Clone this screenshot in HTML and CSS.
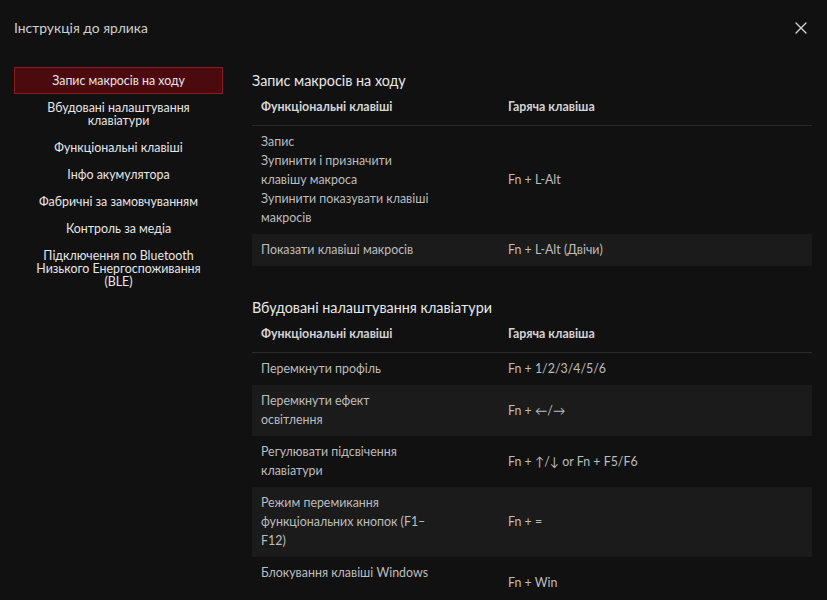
FILE: index.html
```html
<!DOCTYPE html>
<html lang="uk">
<head>
<meta charset="utf-8">
<title>Інструкція до ярлика</title>
<link rel="stylesheet" href="styles.css">
</head>
<body>
<div class="dialog">
  <header class="titlebar">
    <div class="title">Інструкція до ярлика</div>
    <button class="close" aria-label="Закрити">
      <svg width="12" height="12" viewBox="0 0 12 12"><path d="M1 1L11 11M11 1L1 11" stroke="#d2d2d2" stroke-width="1.4" fill="none" stroke-linecap="round"/></svg>
    </button>
  </header>
  <div class="content">
    <nav class="nav">
      <div class="nav-item active">Запис макросів на ходу</div>
      <div class="nav-item">Вбудовані налаштування клавіатури</div>
      <div class="nav-item">Функціональні клавіші</div>
      <div class="nav-item">Інфо акумулятора</div>
      <div class="nav-item">Фабричні за замовчуванням</div>
      <div class="nav-item">Контроль за медіа</div>
      <div class="nav-item">Підключення по Bluetooth Низького Енергоспоживання (BLE)</div>
    </nav>
    <main class="main">
      <section class="section">
        <h2 class="section-title">Запис макросів на ходу</h2>
        <div class="table">
          <div class="row head">
            <div class="cell">Функціональні клавіші</div>
            <div class="cell">Гаряча клавіша</div>
          </div>
          <div class="row">
            <div class="cell">
              <div>Запис</div>
              <div>Зупинити і призначити клавішу макроса</div>
              <div>Зупинити показувати клавіші макросів</div>
            </div>
            <div class="cell">Fn + L-Alt</div>
          </div>
          <div class="row">
            <div class="cell">Показати клавіші макросів</div>
            <div class="cell">Fn + L-Alt (Двічи)</div>
          </div>
        </div>
      </section>
      <section class="section">
        <h2 class="section-title">Вбудовані налаштування клавіатури</h2>
        <div class="table">
          <div class="row head">
            <div class="cell">Функціональні клавіші</div>
            <div class="cell">Гаряча клавіша</div>
          </div>
          <div class="row">
            <div class="cell">Перемкнути профіль</div>
            <div class="cell">Fn + 1/2/3/4/5/6</div>
          </div>
          <div class="row">
            <div class="cell">Перемкнути ефект освітлення</div>
            <div class="cell">Fn + ←/→</div>
          </div>
          <div class="row">
            <div class="cell">Регулювати підсвічення клавіатури</div>
            <div class="cell">Fn + ↑/↓ or Fn + F5/F6</div>
          </div>
          <div class="row">
            <div class="cell">Режим перемикання функціональних кнопок (F1–F12)</div>
            <div class="cell">Fn + =</div>
          </div>
          <div class="row tall">
            <div class="cell top">Блокування клавіші Windows</div>
            <div class="cell">Fn + Win</div>
          </div>
        </div>
      </section>
    </main>
  </div>
</div>
</body>
</html>
```
FILE: styles.css
```css
* { box-sizing: border-box; }
html, body {
  margin: 0;
  padding: 0;
  background: #111111;
  height: 600px;
  overflow: hidden;
}
body {
  font-family: "Lato", "Noto Sans", sans-serif;
  font-size: 12.4px;
  color: #bdbdbd;
}
.titlebar {
  height: 55px;
  display: flex;
  align-items: center;
  justify-content: space-between;
  padding: 0 20px 0 14px;
}
.title {
  font-size: 13.9px;
  color: #cfcfcf;
}
.close {
  background: none;
  border: 0;
  padding: 0;
  width: 12px;
  height: 12px;
  display: flex;
  cursor: pointer;
}
.content {
  display: flex;
  gap: 29px;
  padding: 12px 15px 0 14px;
}
.nav {
  width: 209px;
  flex: none;
  display: flex;
  flex-direction: column;
}
.nav-item {
  text-align: center;
  color: #e6e6e6;
  line-height: 13px;
  padding: 6px 16px;
  border: 1px solid transparent;
}
.nav-item.active {
  background: #4a0a0e;
  border-color: #8a1c22;
}
.main {
  flex: 1;
  padding-top: 4.5px;
}
.section + .section {
  margin-top: 33px;
}
.section-title {
  margin: 0;
  font-size: 14.35px;
  font-weight: 400;
  line-height: 17px;
  color: #e8e8e8;
}
.row {
  display: grid;
  grid-template-columns: 247px 1fr;
  align-items: center;
  padding: 6.5px 0;
  line-height: 19px;
}
.row:nth-child(odd):not(.head) {
  background: #1b1b1b;
}
.row.head {
  padding: 8px 0 9px;
  font-weight: 700;
  color: #d4d4d4;
  border-bottom: 1px solid #2a2a2a;
}
.cell {
  padding-left: 9px;
}
.row:not(.head) .cell:first-child {
  max-width: 177px;
}
.row.tall {
  min-height: 51px;
}
.cell.top {
  align-self: start;
}
```
